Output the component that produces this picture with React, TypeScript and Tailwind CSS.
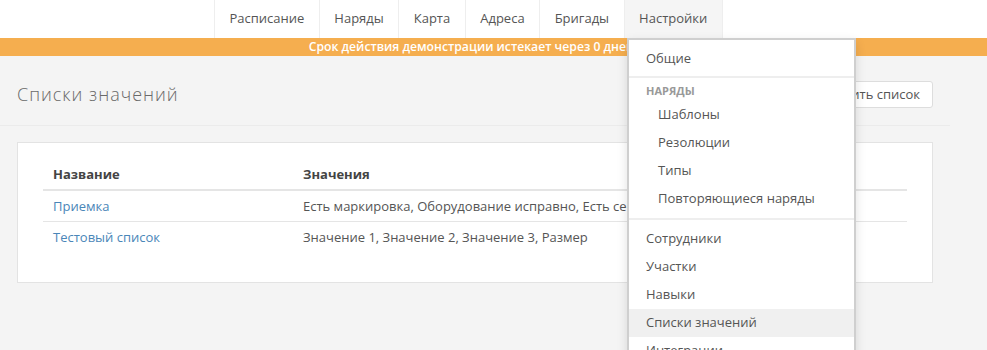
import React from 'react';

const navItems = ['Расписание', 'Наряды', 'Карта', 'Адреса', 'Бригады', 'Настройки'];

const rows = [
  { name: 'Приемка', values: 'Есть маркировка, Оборудование исправно, Есть сертификат' },
  { name: 'Тестовый список', values: 'Значение 1, Значение 2, Значение 3, Размер' },
];

export default function App() {
  return (
    <div className="relative h-[350px] w-[987px] overflow-hidden bg-[#f4f4f4] font-['Open_Sans',sans-serif] text-[13px] text-[#555]">
      {/* Top nav */}
      <nav className="flex h-[38px] bg-white pl-[214px]">
        {navItems.map((item, i) => (
          <div
            key={item}
            className={`flex items-center border-l border-[#eee] px-[14.5px] ${
              i === navItems.length - 1 ? 'border-r bg-[#f5f5f5]' : ''
            }`}
          >
            {item}
          </div>
        ))}
      </nav>

      {/* Demo banner */}
      <div className="flex h-[18px] items-center justify-center bg-[#f5ae4f] pr-[44px] text-[12.2px] font-semibold text-white">
        <span>Срок действия демонстрации истекает через 0 дней</span>
      </div>

      <div className="w-[950px]">
        {/* Page header */}
        <div className="flex h-[70px] items-center justify-between border-b border-[#ebebeb] px-[17px] pt-[8px]">
          <h1 className="text-[18px] font-light tracking-[1px] text-[#6a6a6a]">Списки значений</h1>
          <button className="h-[27px] rounded-[3px] border border-[#ddd] bg-white px-[12px] text-[13px] text-[#555]">
            Добавить список
          </button>
        </div>

        {/* Card */}
        <div className="px-[17px] pt-[16px]">
          <div className="border border-[#e3e3e3] bg-white pb-[30px] pl-[25px] pr-[25px] pt-[17px]">
            <table className="w-full border-collapse text-left">
              <thead>
                <tr className="border-b-2 border-[#e5e5e5]">
                  <th className="h-[30px] w-[260px] pl-[10px] align-middle font-bold text-[#444]">Название</th>
                  <th className="h-[30px] align-middle font-bold text-[#444]">Значения</th>
                </tr>
              </thead>
              <tbody>
                {rows.map((r, i) => (
                  <tr key={r.name} className={i === 0 ? 'border-b border-[#e5e5e5]' : ''}>
                    <td className="h-[31px] pl-[10px] pt-[2px] text-[#4a86b8]">{r.name}</td>
                    <td className="h-[31px] pt-[2px] text-[#555]">{r.values}</td>
                  </tr>
                ))}
              </tbody>
            </table>
          </div>
        </div>
      </div>

      {/* Settings dropdown */}
      <div className="absolute left-[627px] top-[38px] w-[229px] border-x-2 border-t-2 border-[#cfcfcf] bg-white pt-[5px] shadow-[0_4px_10px_rgba(0,0,0,0.12)]">
        <div className="flex h-[28px] items-center px-[17px]">Общие</div>
        <div className="my-[3px] h-[2px] bg-[#eee]" />
        <div className="flex h-[20px] items-center px-[17px] text-[11px] font-bold uppercase text-[#999]">Наряды</div>
        {['Шаблоны', 'Резолюции', 'Типы', 'Повторяющиеся наряды'].map((s) => (
          <div key={s} className="flex h-[28px] items-center pl-[29px]">
            {s}
          </div>
        ))}
        <div className="mb-[5px] mt-[5px] h-[2px] bg-[#eee]" />
        {['Сотрудники', 'Участки', 'Навыки', 'Списки значений', 'Интеграции'].map((s) => (
          <div
            key={s}
            className={`flex h-[28px] items-center px-[17px] ${s === 'Списки значений' ? 'bg-[#f0f0f0]' : ''}`}
          >
            {s}
          </div>
        ))}
      </div>
    </div>
  );
}
